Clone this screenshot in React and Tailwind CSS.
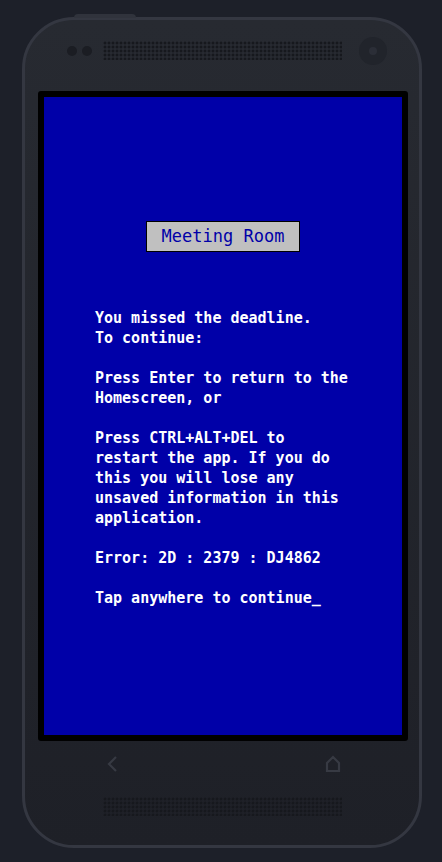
import React from "react";

const mono = { fontFamily: '"DejaVu Sans Mono", "Liberation Mono", monospace' };

// dotted speaker grille
const Grille = () => (
  <div className="h-[19px] w-[239px] bg-[radial-gradient(circle,#16181d_1.3px,transparent_1.7px)] bg-[length:4px_4px] bg-[position:0_0]" />
);

const App = () => {
  return (
    <div className="min-h-[862px] w-[442px] bg-[#1d2029] pt-[17px] pl-[22px] overflow-hidden">
      {/* Phone body */}
      <div className="relative h-[831px] w-[400px] rounded-[52px] border-[3px] border-[#343741] bg-gradient-to-b from-[#272a31] to-[#1e2027]">
        {/* top power button */}
        <div className="absolute -top-[6px] left-[49px] h-[4px] w-[62px] rounded-t-sm bg-[#30333c]" />

        {/* Top bar: sensors, speaker, camera */}
        <div className="flex h-[71px] items-center pl-[42px] pr-[32px] pb-[10px]">
          <div className="flex gap-[5px]">
            <span className="h-[10px] w-[10px] rounded-full bg-[#1b1d23]" />
            <span className="h-[10px] w-[10px] rounded-full bg-[#1b1d23]" />
          </div>
          <div className="ml-[11px]">
            <Grille />
          </div>
          <div className="ml-auto flex h-[28px] w-[28px] items-center justify-center rounded-full bg-[#21242b]">
            <span className="h-[8px] w-[8px] rounded-full bg-[#2b2e37]" />
          </div>
        </div>

        {/* Screen */}
        <div className="ml-[13px] h-[650px] w-[370px] rounded-[3px] bg-black p-[6px]">
          <div
            className="flex h-full w-full flex-col items-center bg-[#0000a8] pt-[124px] text-white"
            style={mono}
          >
            <div className="flex h-[31px] w-[154px] items-center justify-center border border-black bg-[#c0c0c0] text-[17px] text-[#0000a8]">
              Meeting Room
            </div>
            <div className="mt-[56px] w-[258px] self-start ml-[51px] text-[15px] font-bold leading-[20px] whitespace-pre">
              <div>You missed the deadline.</div>
              <div>To continue:</div>
              <div>&nbsp;</div>
              <div>Press Enter to return to the</div>
              <div>Homescreen, or</div>
              <div>&nbsp;</div>
              <div>Press CTRL+ALT+DEL to</div>
              <div>restart the app. If you do</div>
              <div>this you will lose any</div>
              <div>unsaved information in this</div>
              <div>application.</div>
              <div>&nbsp;</div>
              <div>Error: 2D : 2379 : DJ4862</div>
              <div>&nbsp;</div>
              <div>Tap anywhere to continue_</div>
            </div>
          </div>
        </div>

        {/* Nav buttons */}
        <div className="flex items-center justify-between pl-[80px] pr-[78px] pt-[14px]">
          <svg width="14" height="18" viewBox="0 0 14 18" fill="none">
            <path d="M11 2 L4 9 L11 16" stroke="#373a43" strokeWidth="2.2" />
          </svg>
          <svg width="16" height="18" viewBox="0 0 16 18" fill="none">
            <path d="M2 16 V8 L8 2 L14 8 V16 Z" stroke="#373a43" strokeWidth="2.2" strokeLinejoin="miter" />
          </svg>
        </div>

        {/* Bottom speaker */}
        <div className="ml-[78px] mt-[24px]">
          <Grille />
        </div>
      </div>
    </div>
  );
};

export default App;
